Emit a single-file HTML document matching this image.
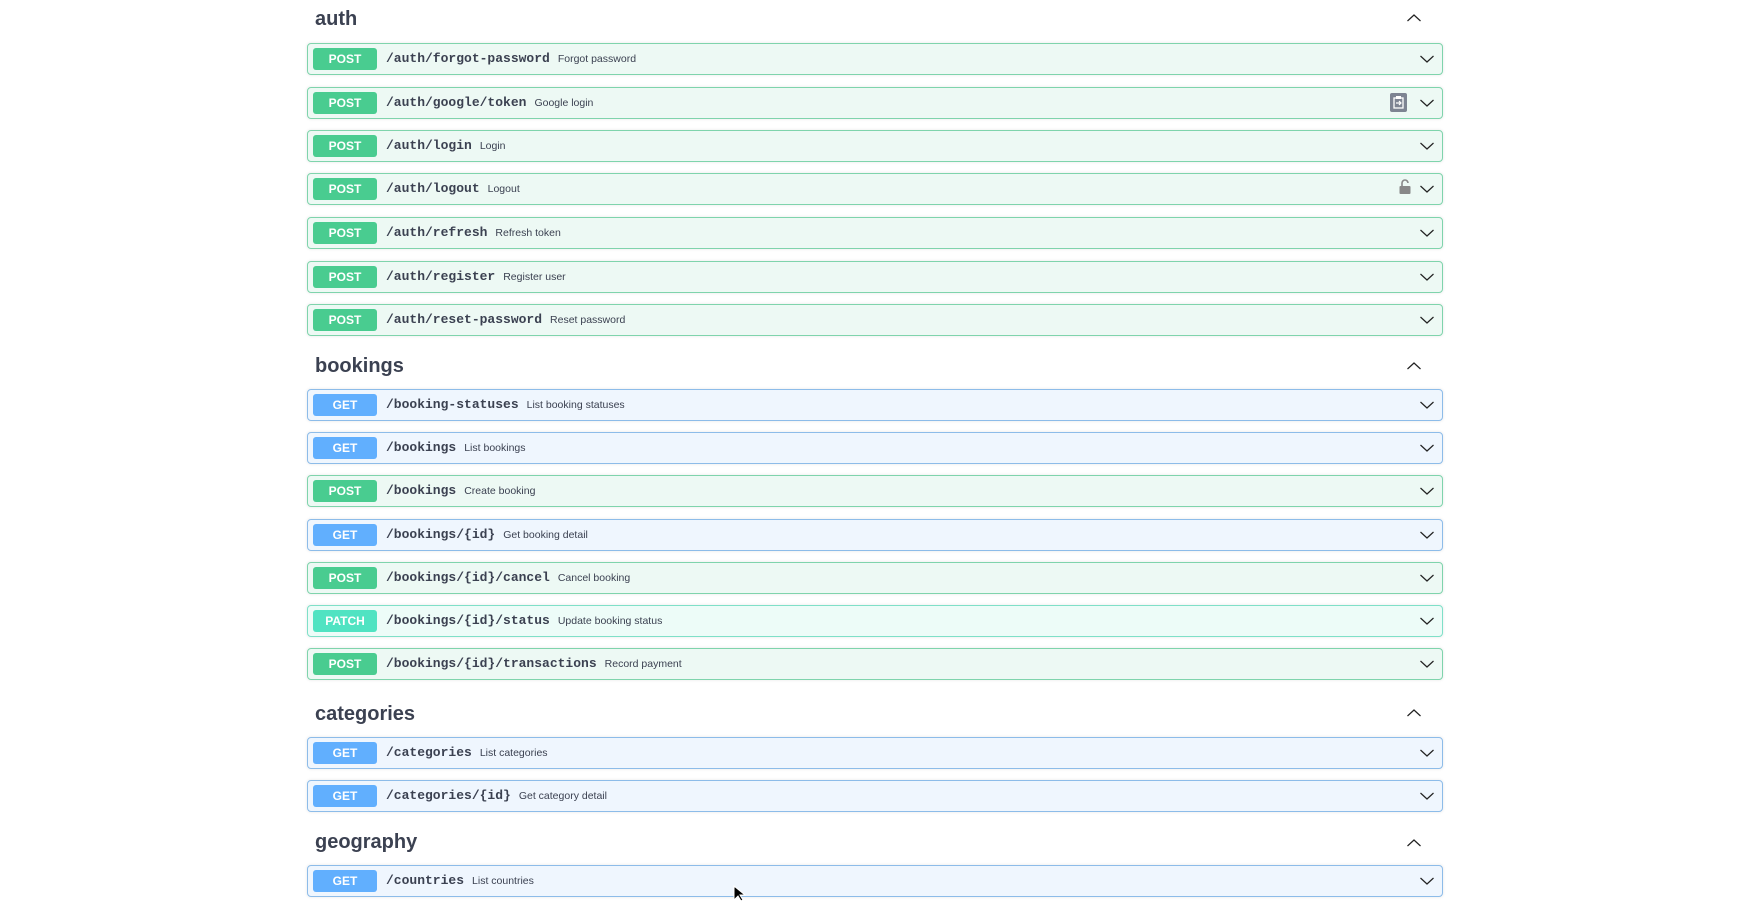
<!DOCTYPE html>
<html><head><meta charset="utf-8"><style>
*{box-sizing:border-box;margin:0;padding:0}
body{width:1745px;height:901px;background:#fff;position:relative;overflow:hidden;font-family:"Liberation Sans",sans-serif}
.h{position:absolute;left:315px;font-size:20px;font-weight:bold;color:#3b4151;line-height:24px}
.hc{position:absolute;left:1406px;width:16px;height:10px}
.r{position:absolute;left:307px;width:1136px;height:32px;border:1px solid;border-radius:4px;box-shadow:0 0 3px rgba(0,0,0,.1)}
.post{background:#edf9f4;border-color:#7fd4ac}
.get{background:#eff6fe;border-color:#8dbce9}
.patch{background:#edfcf8;border-color:#7fe0c8}
.b{position:absolute;left:5px;top:4px;width:64px;height:22px;border-radius:3px;color:#fff;font-weight:bold;font-size:12px;line-height:22px;text-align:center}
.post .b{background:#49cc90}.get .b{background:#61affe}.patch .b{background:#50e3c2}
.p{position:absolute;left:78px;top:0;line-height:30px;font-family:"Liberation Mono","DejaVu Sans Mono",monospace;font-weight:bold;font-size:13px;color:#3b4151;white-space:nowrap}
.p span{font-family:"Liberation Sans",sans-serif;font-weight:normal;font-size:10.5px;margin-left:8px}
.c{position:absolute;left:1111px;top:10px;width:16px;height:10px}
</style></head><body>
<svg width="0" height="0" style="position:absolute"><defs>
<symbol id="dn" viewBox="0 0 16 10"><path d="M1.5 2 L8 8 L14.5 2" fill="none" stroke="#222" stroke-width="1.2"/></symbol>
<symbol id="up" viewBox="0 0 16 10"><path d="M1.5 8 L8 2 L14.5 8" fill="none" stroke="#222" stroke-width="1.2"/></symbol>
</defs></svg>

<div class="h" style="top:7px">auth</div><svg class="hc" style="top:13px"><use href="#up"/></svg>
<div class="r post" style="top:43px"><div class="b">POST</div><div class="p">/auth/forgot-password<span>Forgot password</span></div><svg class="c"><use href="#dn"/></svg></div>
<div class="r post" style="top:87px"><div class="b">POST</div><div class="p">/auth/google/token<span>Google login</span></div>
<svg style="position:absolute;left:1082px;top:5px" width="17" height="19" viewBox="0 0 17 19"><rect width="17" height="19" rx="2" fill="#7d8492"/><rect x="4" y="5" width="9" height="10" fill="none" stroke="#fff" stroke-width="1.3"/><rect x="6" y="3" width="5" height="3" fill="#fff"/><path d="M6 10h5M9 12l2-2-2-2" stroke="#fff" fill="none" stroke-width="1.2"/></svg>
<svg class="c"><use href="#dn"/></svg></div>
<div class="r post" style="top:130px"><div class="b">POST</div><div class="p">/auth/login<span>Login</span></div><svg class="c"><use href="#dn"/></svg></div>
<div class="r post" style="top:173px"><div class="b">POST</div><div class="p">/auth/logout<span>Logout</span></div>
<svg style="position:absolute;left:1091px;top:5px" width="12" height="16" viewBox="0 0 12 16"><path d="M3 7V4a3 3 0 0 1 6 0" fill="none" stroke="#888" stroke-width="1.6"/><rect x="0.5" y="7" width="11" height="8" rx="1" fill="#888"/></svg>
<svg class="c"><use href="#dn"/></svg></div>
<div class="r post" style="top:217px"><div class="b">POST</div><div class="p">/auth/refresh<span>Refresh token</span></div><svg class="c"><use href="#dn"/></svg></div>
<div class="r post" style="top:261px"><div class="b">POST</div><div class="p">/auth/register<span>Register user</span></div><svg class="c"><use href="#dn"/></svg></div>
<div class="r post" style="top:304px"><div class="b">POST</div><div class="p">/auth/reset-password<span>Reset password</span></div><svg class="c"><use href="#dn"/></svg></div>

<div class="h" style="top:354px">bookings</div><svg class="hc" style="top:361px"><use href="#up"/></svg>
<div class="r get" style="top:389px"><div class="b">GET</div><div class="p">/booking-statuses<span>List booking statuses</span></div><svg class="c"><use href="#dn"/></svg></div>
<div class="r get" style="top:432px"><div class="b">GET</div><div class="p">/bookings<span>List bookings</span></div><svg class="c"><use href="#dn"/></svg></div>
<div class="r post" style="top:475px"><div class="b">POST</div><div class="p">/bookings<span>Create booking</span></div><svg class="c"><use href="#dn"/></svg></div>
<div class="r get" style="top:519px"><div class="b">GET</div><div class="p">/bookings/{id}<span>Get booking detail</span></div><svg class="c"><use href="#dn"/></svg></div>
<div class="r post" style="top:562px"><div class="b">POST</div><div class="p">/bookings/{id}/cancel<span>Cancel booking</span></div><svg class="c"><use href="#dn"/></svg></div>
<div class="r patch" style="top:605px"><div class="b">PATCH</div><div class="p">/bookings/{id}/status<span>Update booking status</span></div><svg class="c"><use href="#dn"/></svg></div>
<div class="r post" style="top:648px"><div class="b">POST</div><div class="p">/bookings/{id}/transactions<span>Record payment</span></div><svg class="c"><use href="#dn"/></svg></div>

<div class="h" style="top:702px">categories</div><svg class="hc" style="top:708px"><use href="#up"/></svg>
<div class="r get" style="top:737px"><div class="b">GET</div><div class="p">/categories<span>List categories</span></div><svg class="c"><use href="#dn"/></svg></div>
<div class="r get" style="top:780px"><div class="b">GET</div><div class="p">/categories/{id}<span>Get category detail</span></div><svg class="c"><use href="#dn"/></svg></div>

<div class="h" style="top:830px">geography</div><svg class="hc" style="top:838px"><use href="#up"/></svg>
<div class="r get" style="top:865px"><div class="b">GET</div><div class="p">/countries<span>List countries</span></div><svg class="c"><use href="#dn"/></svg></div>
<svg style="position:absolute;left:733px;top:885px" width="14" height="16" viewBox="0 0 14 16"><path d="M1 1v14l4-4 3 5 2-1-3-5h5z" fill="#000" stroke="#fff"/></svg>
</body></html>
